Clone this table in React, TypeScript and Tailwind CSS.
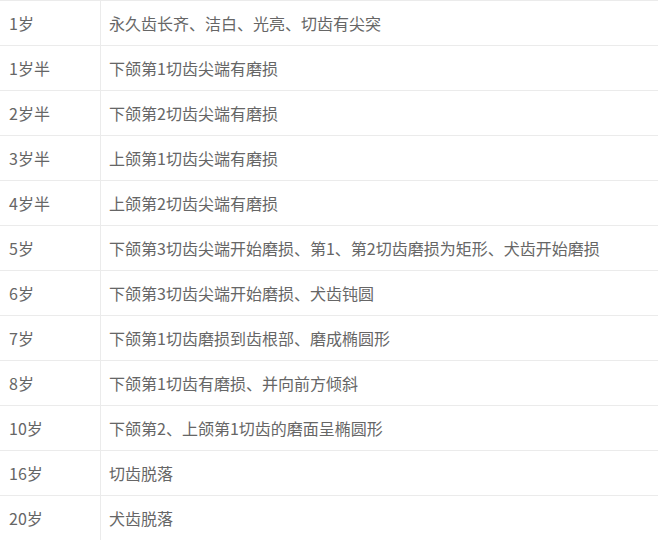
import React from 'react';

const rows: [string, string][] = [
  ['1岁', '永久齿长齐、洁白、光亮、切齿有尖突'],
  ['1岁半', '下颌第1切齿尖端有磨损'],
  ['2岁半', '下颌第2切齿尖端有磨损'],
  ['3岁半', '上颌第1切齿尖端有磨损'],
  ['4岁半', '上颌第2切齿尖端有磨损'],
  ['5岁', '下颌第3切齿尖端开始磨损、第1、第2切齿磨损为矩形、犬齿开始磨损'],
  ['6岁', '下颌第3切齿尖端开始磨损、犬齿钝圆'],
  ['7岁', '下颌第1切齿磨损到齿根部、磨成椭圆形'],
  ['8岁', '下颌第1切齿有磨损、并向前方倾斜'],
  ['10岁', '下颌第2、上颌第1切齿的磨面呈椭圆形'],
  ['16岁', '切齿脱落'],
  ['20岁', '犬齿脱落'],
];

const App: React.FC = () => {
  return (
    <div
      className="w-[658px] h-[540px] overflow-hidden bg-white text-[16px] text-[#666]"
      style={{ fontFamily: '"Microsoft YaHei", "Noto Sans CJK SC", sans-serif' }}
    >
      {rows.map(([age, desc], i) => (
        <div key={i} className="flex h-[45px] border-t border-[#ebebeb]">
          <div className="w-[101px] shrink-0 border-r border-[#ebebeb] pl-[9px] flex items-center">
            {age}
          </div>
          <div className="pl-[8px] flex items-center whitespace-nowrap">{desc}</div>
        </div>
      ))}
    </div>
  );
};

export default App;
